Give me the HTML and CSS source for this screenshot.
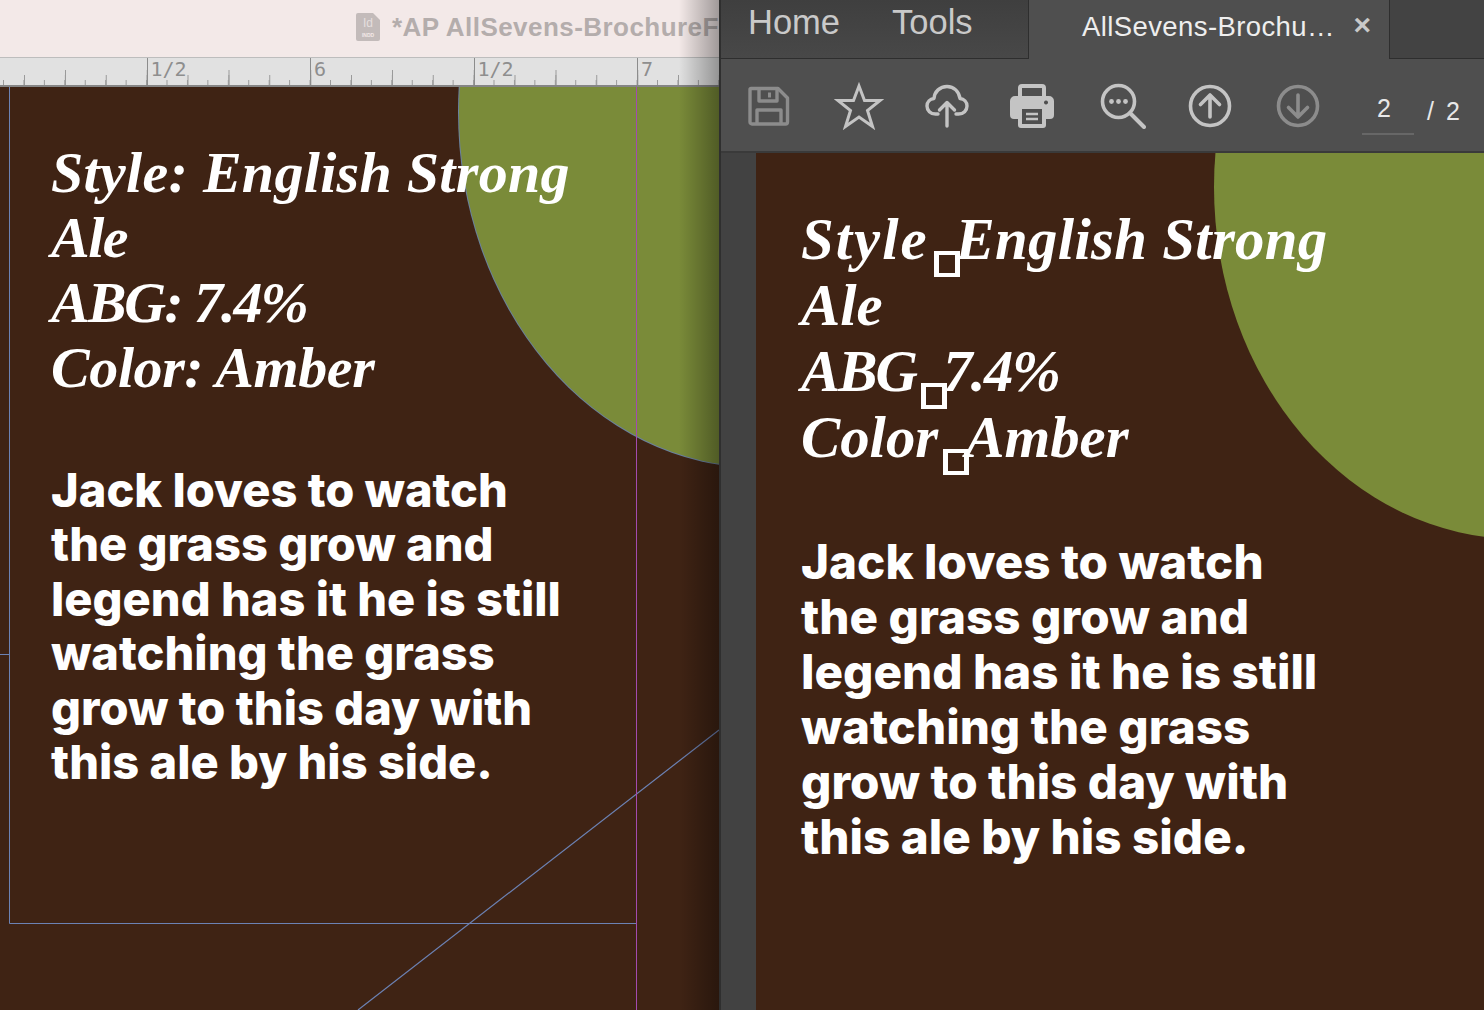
FILE: index.html
```html
<!doctype html>
<html lang="en">
<head>
  <meta charset="utf-8" />
  <meta name="viewport" content="width=device-width,initial-scale=1" />
  <title>AllSevens Brochure</title>
  <link rel="stylesheet" href="styles.css">
</head>
<body>

<div class="screen">

  <section class="indesign">
    <div class="doc-title">
      <svg class="doc-icon" width="24" height="28" viewBox="0 0 24 28">
        <path d="M2 0h15l7 7v19a2 2 0 0 1-2 2H2a2 2 0 0 1-2-2V2a2 2 0 0 1 2-2z" fill="#c3bbba"/>
        <text x="12" y="14" class="doc-icon-id">Id</text>
        <text x="12" y="24" class="doc-icon-ext">INDD</text>
      </svg>
      <span class="doc-name">*AP AllSevens-BrochureF</span>
    </div>
    <div class="ruler">
      <div class="ruler-cell">1/2</div>
      <div class="ruler-cell">6</div>
      <div class="ruler-cell">1/2</div>
      <div class="ruler-cell">7</div>
    </div>
    <div class="canvas">
      <div class="blob blob-selected"></div>
      <svg class="guides" width="719" height="923" viewBox="0 0 719 923">
        <path d="M9.5 0V836.5H636.5" fill="none" stroke="#6c82b4"/>
        <path d="M0 567.5H9" fill="none" stroke="#6c82b4"/>
        <path d="M719 643L358 923" fill="none" stroke="#6c82b4" stroke-width="1.2"/>
        <path d="M636.5 0V923" fill="none" stroke="#a24bb0"/>
      </svg>
      <div class="copy copy-left">
        <p class="specs"><span class="line-style">Style: English Strong</span><br><span class="line-ale">Ale</span><br><span class="line-abg">ABG: 7.4%</span><br><span class="line-color">Color: Amber</span></p>
        <p class="blurb">Jack loves to watch<br>the grass grow and<br>legend has it he is still<br>watching the grass<br>grow to this day with<br>this ale by his side.</p>
      </div>
    </div>
    <div class="edge-shade"></div>
  </section>

  <section class="reader">
    <div class="tabbar">
      <nav class="tab-nav">
        <span class="tab-link tab-home">Home</span>
        <span class="tab-link">Tools</span>
      </nav>
      <div class="tab-file">
        <span class="tab-name">AllSevens-Brochu…</span>
        <span class="tab-close">×</span>
      </div>
      <div class="tab-rest"></div>
    </div>

    <div class="toolbar">
      <svg class="tool tool-save" width="42" height="40" viewBox="0 0 42 40" fill="none" stroke="#8c8c8c" stroke-width="3.4" stroke-linejoin="round">
        <path d="M3 2.5H30L39.500 12V36A2 2 0 0 1 37.500 38H4A2 2 0 0 1 2 36V3.500A1 1 0 0 1 3 2.500Z"/>
        <path d="M11 3V15H29V3"/>
        <path d="M21.500 6.500V11.500" stroke-width="3"/>
        <path d="M9 38V24H33V38"/>
      </svg>
      <svg class="tool tool-star" width="50" height="48" viewBox="0 0 50 48" fill="none" stroke="#c4c4c4" stroke-width="3" stroke-linejoin="miter">
        <path d="M25 4L30.500 18.500H46L33.500 28.500L38.500 44.500L25 35L11.500 44.500L16.500 28.500L4 18.500H19.500Z"/>
      </svg>
      <svg class="tool tool-cloud" width="44" height="44" viewBox="0 0 44 44" fill="none" stroke="#c4c4c4" stroke-width="3.400" stroke-linecap="round" stroke-linejoin="round">
        <path d="M13 30H10.500C5.500 30 2 26.500 2 22C2 18 5 15 9 14.500C9.500 7.500 15 2.500 22 2.500C29 2.500 34 7.500 35 14.500C39 15 42 18 42 22C42 26.500 38.500 30 33.500 30H31"/>
        <path d="M22 42V19M14.500 26L22 18.500L29.500 26"/>
      </svg>
      <svg class="tool tool-print" width="44" height="44" viewBox="0 0 44 44">
        <path fill-rule="evenodd" fill="#c4c4c4" d="M8 12V4a4 4 0 0 1 4-4h20a4 4 0 0 1 4 4v8h3a5 5 0 0 1 5 5v14a4 4 0 0 1-4 4h-4v6a3 3 0 0 1-3 3H11a3 3 0 0 1-3-3v-6H4a4 4 0 0 1-4-4V17a5 5 0 0 1 5-5zM12 4v8h20V4zM12 25v15h20V25zM36 16.500a2 2 0 1 0 0.010 0z"/>
        <path d="M16 30H28M16 35H28" stroke="#c4c4c4" stroke-width="2.500"/>
      </svg>
      <svg class="tool tool-search" width="46" height="46" viewBox="0 0 46 46" fill="none" stroke="#c4c4c4" stroke-width="3.600" stroke-linecap="round">
        <circle cx="18.500" cy="18.500" r="16"/>
        <path d="M30 30L44 44" stroke-width="4"/>
        <circle cx="11.500" cy="18.500" r="2.400" fill="#c4c4c4" stroke="none"/>
        <circle cx="18.500" cy="18.500" r="2.400" fill="#c4c4c4" stroke="none"/>
        <circle cx="25.500" cy="18.500" r="2.400" fill="#c4c4c4" stroke="none"/>
      </svg>
      <svg class="tool tool-up" width="44" height="44" viewBox="0 0 44 44" fill="none" stroke="#c4c4c4" stroke-width="3.600" stroke-linecap="round" stroke-linejoin="round">
        <circle cx="22" cy="22" r="19.500"/>
        <path d="M22 33V11M12.500 20.500L22 11L31.500 20.500"/>
      </svg>
      <svg class="tool tool-down" width="44" height="44" viewBox="0 0 44 44" fill="none" stroke="#8c8c8c" stroke-width="3.600" stroke-linecap="round" stroke-linejoin="round">
        <circle cx="22" cy="22" r="19.500"/>
        <path d="M22 11V33M12.500 23.500L22 33L31.500 23.500"/>
      </svg>
      <div class="pager">
        <span class="page-current">2</span>
        <span class="page-total">/ 2</span>
      </div>
    </div>

    <div class="viewer">
      <div class="page">
        <div class="blob blob-pdf"></div>
        <div class="copy copy-right">
          <p class="specs"><span class="word-style">Style</span><span class="missing"></span><span class="word-english">English Strong</span><br>Ale<br><span class="line-abg">ABG</span><span class="missing"></span><span class="word-abv">7.4%</span><br>Color<span class="missing"></span>Amber</p>
          <p class="blurb">Jack loves to watch<br>the grass grow and<br>legend has it he is still<br>watching the grass<br>grow to this day with<br>this ale by his side.</p>
        </div>
      </div>
    </div>
  </section>

</div>

</body>
</html>
```

FILE: styles.css
```css
html,body{margin:0;height:100%;overflow:hidden;}
body{background:#3f2314;font-family:"Liberation Sans",Arial,sans-serif;}
p{margin:0;}
.screen{display:flex;width:1484px;height:1010px;overflow:hidden;}

/* left window */
.indesign{position:relative;width:719px;flex:none;display:flex;flex-direction:column;overflow:hidden;}
.doc-title{height:57px;box-sizing:border-box;flex:none;background:#f3e9e8;display:flex;align-items:center;gap:12px;padding:0 0 3px 356px;white-space:nowrap;}
.doc-icon{flex:none;}
.doc-icon-id{font-size:12px;fill:#e5dfde;text-anchor:middle;}
.doc-icon-ext{font-size:5px;font-weight:bold;fill:#f3e9e8;text-anchor:middle;}
.doc-name{font-size:26px;font-weight:bold;color:#b4adac;letter-spacing:.45px;}
.ruler{height:30px;box-sizing:border-box;flex:none;display:flex;padding-left:146.5px;overflow:hidden;border-top:1px solid #bdbdbd;border-bottom:2px solid #858585;background-color:#e1e1e1;
  background-image:
    linear-gradient(90deg,#9a9a9a 1px,transparent 1px),
    linear-gradient(90deg,#9a9a9a 1px,transparent 1px),
    linear-gradient(90deg,#9a9a9a 1px,transparent 1px);
  background-size:81.75px 15px,40.875px 10px,20.44px 5px;
  background-position:65px 100%,24px 100%,3px 100%;
  background-repeat:repeat-x;}
.ruler-cell{flex:none;width:163.5px;box-sizing:border-box;border-left:1px solid #8c8c8c;padding-left:3px;font-family:"DejaVu Sans Mono",monospace;font-size:20px;line-height:22px;color:#8e8e8e;}
.canvas{position:relative;flex:1;background:#3f2314;overflow:hidden;}
.guides{position:absolute;left:0;top:0;}
.edge-shade{position:absolute;top:0;right:0;bottom:0;width:40px;background:linear-gradient(90deg,rgba(0,0,0,0),rgba(0,0,0,.34));pointer-events:none;}

/* the green shape on the brochure page */
.blob{position:absolute;border-radius:50%;background:#7a8b39;}
.blob-selected{left:459px;top:-330px;width:600px;height:710px;box-shadow:0 0 0 1px #6a82a0;}
.blob-pdf{left:458px;top:-318px;width:608px;height:704px;}

/* brochure copy */
.copy{position:relative;color:#fff;white-space:nowrap;}
.specs{font-family:"Liberation Serif",serif;font-style:italic;font-weight:bold;font-size:58px;line-height:65px;}
.blurb{font-family:Inter,sans-serif;font-weight:800;font-size:47px;line-height:54.4px;}
.copy-left{padding:53px 0 0 51px;}
.copy-left .blurb{margin-top:63px;}
.line-style{letter-spacing:.3px;}
.line-ale{letter-spacing:-1.5px;}
.line-abg{letter-spacing:-2px;}
.line-color{letter-spacing:-.4px;}

.copy-right{padding:54px 0 0 45px;}
.copy-right .specs{font-size:58.8px;line-height:66px;}
.copy-right .blurb{font-size:47.6px;line-height:55px;margin-top:63px;}
.word-style{letter-spacing:2px;}
.word-english{letter-spacing:.3px;}
.word-abv{letter-spacing:-1.5px;}
.missing{display:inline-block;width:26px;height:26px;box-sizing:border-box;border:solid #fff;border-width:4px 5px;vertical-align:-8px;margin:0 -4px -10px 5px;}

/* right window */
.reader{flex:1;display:flex;flex-direction:column;border-left:2px solid #2f2f2f;background:#424242;min-width:0;}
.tabbar{height:59px;box-sizing:border-box;flex:none;display:flex;background:#444;}
.tab-nav{width:308px;flex:none;box-sizing:border-box;display:flex;gap:52px;padding:3px 0 0 27px;background:linear-gradient(180deg,#3f3f3f,#484848);border-bottom:1px solid #2e2e2e;border-right:1px solid #2e2e2e;}
.tab-link{font-size:34.5px;line-height:38px;color:#c9c9c9;}
.tab-file{width:360px;flex:none;box-sizing:border-box;background:#4f4f4f;display:flex;justify-content:space-between;padding:8px 18px 0 53px;}
.tab-name{font-size:27.5px;line-height:38px;color:#eee;letter-spacing:.4px;}
.tab-close{font-size:30px;line-height:34px;font-weight:bold;color:#c9c9c9;}
.tab-rest{flex:1;background:#434343;border-bottom:1px solid #2e2e2e;border-left:1px solid #2e2e2e;}
.toolbar{height:94px;box-sizing:border-box;flex:none;display:flex;align-items:center;background:#4f4f4f;border-bottom:2px solid #3a3a3a;padding:1px 0 0 27px;}
.tool{flex:none;display:block;}
.tool-star{margin-left:44px;}
.tool-cloud{margin-left:41px;}
.tool-print{margin-left:41px;}
.tool-search{margin-left:46px;}
.tool-up{margin-left:42px;}
.tool-down{margin-left:44px;}
.pager{margin:17px 0 0 42px;display:flex;align-items:flex-start;color:#e8e8e8;font-size:25px;line-height:30px;}
.page-current{width:52px;box-sizing:border-box;text-align:center;padding:0 8px 10px 0;border-bottom:2px solid #676767;}
.page-total{margin:3px 0 0 13px;word-spacing:5px;}
.viewer{flex:1;padding-left:35px;min-height:0;}
.page{position:relative;height:100%;background:#3f2314;overflow:hidden;}
```
